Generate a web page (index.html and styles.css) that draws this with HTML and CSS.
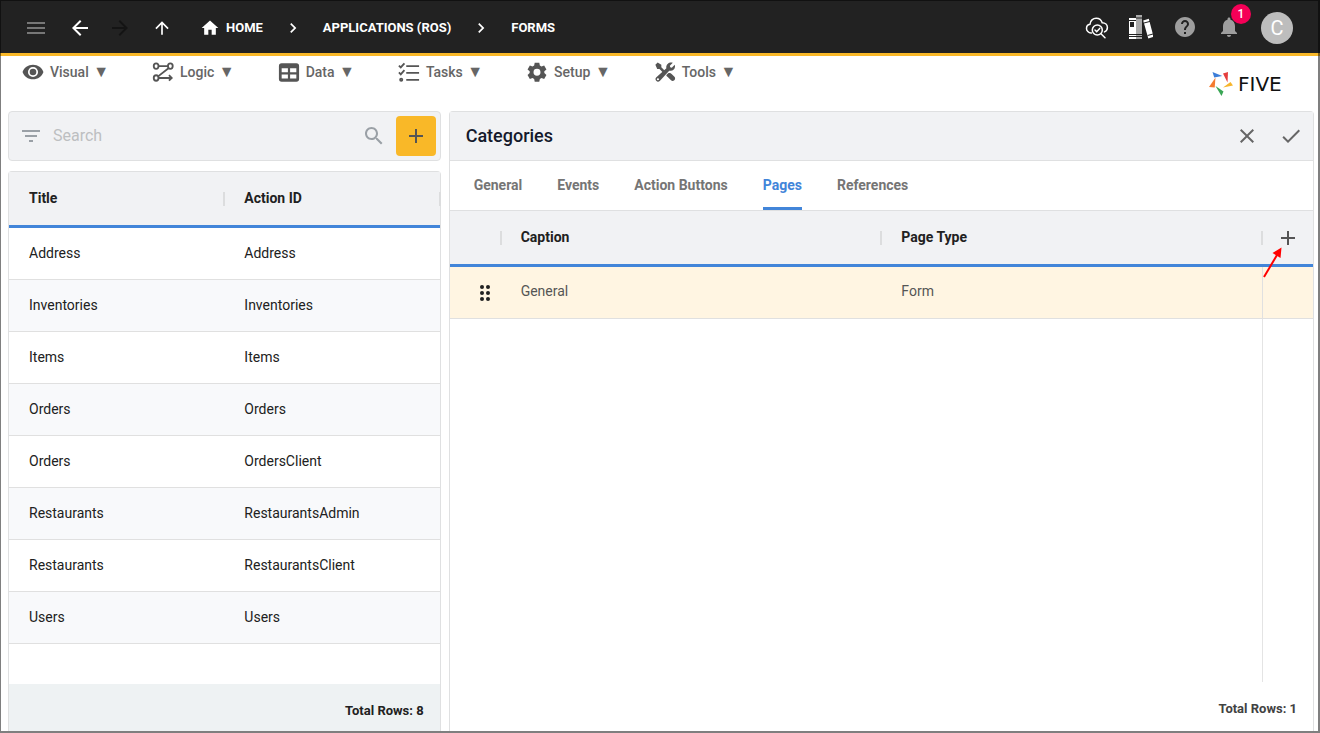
FILE: index.html
```html
<!DOCTYPE html>
<html lang="en">
<head>
<meta charset="utf-8">
<meta name="viewport" content="width=device-width, initial-scale=1">
<title>Five - Forms</title>
<link rel="stylesheet" href="styles.css">
</head>
<body>
<div class="app">
  <header class="topbar">
    <nav class="crumbs" aria-label="Breadcrumb">
      <button class="nav-btn dim" aria-label="Menu"><svg class="i24" viewBox="0 0 24 24"><path d="M3 18h18v-2H3v2zm0-5h18v-2H3v2zm0-7v2h18V6H3z"/></svg></button>
      <button class="nav-btn back" aria-label="Back"><svg class="i24" viewBox="0 0 24 24"><path d="M20 11H7.83l5.59-5.59L12 4l-8 8 8 8 1.41-1.41L7.83 13H20v-2z"/></svg></button>
      <button class="nav-btn forward" aria-label="Forward"><svg class="i24" viewBox="0 0 24 24"><path d="M12 4l-1.41 1.41L16.17 11H4v2h12.17l-5.58 5.59L12 20l8-8z"/></svg></button>
      <button class="nav-btn up" aria-label="Up"><svg class="i20" viewBox="0 0 24 24"><path d="M4 12l1.41 1.41L11 7.83V20h2V7.83l5.58 5.59L20 12l-8-8-8 8z"/></svg></button>
      <a class="crumb home" href="#"><svg class="i20" viewBox="0 0 24 24"><path d="M10 20v-6h4v6h5v-8h3L12 3 2 12h3v8z"/></svg>HOME</a>
      <svg class="i20" viewBox="0 0 24 24"><path d="M10 6L8.59 7.41 13.17 12l-4.58 4.59L10 18l6-6z"/></svg>
      <a class="crumb" href="#">APPLICATIONS (ROS)</a>
      <svg class="i20" viewBox="0 0 24 24"><path d="M10 6L8.59 7.41 13.17 12l-4.58 4.59L10 18l6-6z"/></svg>
      <a class="crumb" href="#">FORMS</a>
    </nav>
    <div class="tools">
      <button class="nav-btn" aria-label="Inspect cloud">
        <svg class="i24 cloud" viewBox="0 0 24 24"><path d="M6.500 18H6C3.500 18 1.500 15.800 1.500 13.400c0-2.300 1.700-3.900 3.500-4.200C5.200 5.700 8 3.200 11.200 3.200c3 0 5.200 1.800 6 4.600 3 0 5.200 2 5.200 4.700 0 2-1.100 3.600-2.900 4.400"/><circle cx="12.300" cy="15" r="5"/><path d="M10 15l1.700 1.700 3-3.300M16 18.700l4 4"/></svg></button>
      <button class="nav-btn" aria-label="Library">
        <svg class="i24 books" viewBox="0 0 24 24"><path d="M0 3h7v21H0zM14.200 5.400l5.600-1.700L24.500 21.800l-5.200 1.700z"/><path class="spine" d="M7 0h6v24H7z"/><path class="rule" d="M0 5.500h7M0 19.500h13M0 21.500h13M7 3h6M15 8l6-1.600M18.600 20.500l5.400-1.500"/><path class="label" d="M1 7h4v5H1z"/></svg></button>
      <button class="nav-btn soft" aria-label="Help"><svg class="i24" viewBox="0 0 24 24"><path d="M12 2C6.480 2 2 6.480 2 12s4.480 10 10 10 10-4.480 10-10S17.520 2 12 2zm1 17h-2v-2h2v2zm2.070-7.750l-.9.920C13.450 12.900 13 13.500 13 15h-2v-.5c0-1.100.45-2.100 1.170-2.830l1.240-1.260c.37-.36.59-.86.590-1.410 0-1.100-.9-2-2-2s-2 .9-2 2H8c0-2.210 1.790-4 4-4s4 1.790 4 4c0 .88-.36 1.680-.93 2.250z"/></svg></button>
      <button class="nav-btn soft bell" aria-label="Notifications"><svg class="i24" viewBox="0 0 24 24"><path d="M12 22c1.100 0 2-.9 2-2h-4c0 1.100.89 2 2 2zm6-6v-5c0-3.070-1.640-5.640-4.500-6.320V4c0-.83-.67-1.500-1.500-1.500s-1.500.67-1.500 1.500v.68C7.630 5.360 6 7.920 6 11v5l-2 2v1h16v-1l-2-2z"/></svg><span class="badge">1</span></button>
      <button class="avatar" aria-label="Account">C</button>
    </div>
  </header>

  <div class="menubar">
    <nav class="menus" aria-label="Main">
      <button class="menu"><svg class="i22" viewBox="0 0 24 24"><path fill-rule="evenodd" d="M12 4C6.500 4 2.200 7.200.6 12 2.200 16.800 6.500 20 12 20s9.800-3.200 11.400-8C21.800 7.200 17.500 4 12 4zm0 13.500a5.500 5.500 0 110-11 5.500 5.500 0 010 11z"/><circle cx="12" cy="12" r="3.600"/></svg><span>Visual <span class="caret">▼</span></span></button>
      <button class="menu"><svg class="i22 line" viewBox="0 0 24 24"><ellipse cx="4.500" cy="5.500" rx="2.600" ry="3"/><ellipse cx="20" cy="5.500" rx="2.600" ry="3"/><ellipse cx="4.500" cy="18.500" rx="2.600" ry="3"/><path d="M7.500 5.500h10M18 8L7 16.500M7.500 18.500h14M18.500 15.500l3 3-3 3"/></svg><span>Logic <span class="caret">▼</span></span></button>
      <button class="menu"><svg class="i22" viewBox="0 0 24 24"><path fill-rule="evenodd" d="M4 2.500h16A3 3 0 0123 5.500v14a3 3 0 01-3 3H4a3 3 0 01-3-3v-14a3 3 0 013-3zM4 8v4.300h6.800V8zm9.200 0v4.300H20V8zM4 14.800v4.400h6.800v-4.400zm9.200 0v4.400H20v-4.400z"/></svg><span>Data <span class="caret">▼</span></span></button>
      <button class="menu"><svg class="i22 line" viewBox="0 0 24 24"><path d="M9 5.500h14M9 13h14M9 20.500h14M1 5l2 2 4-4.500M1 12.500l2 2L7 10"/><circle cx="3.500" cy="20.500" r="1.200"/></svg><span>Tasks <span class="caret">▼</span></span></button>
      <button class="menu"><svg class="i22" viewBox="0 0 24 24"><path fill-rule="evenodd" d="M9.500 2h5l.6 3 1.800 1 2.900-1 2.500 4.300-2.300 2v1.900l2.300 2-2.500 4.300-2.900-1-1.800 1-.6 3h-5l-.6-3-1.800-1-2.900 1-2.500-4.300 2.300-2v-1.900l-2.300-2L4.200 5l2.900 1 1.800-1zM12 8.400a3.800 3.800 0 100 7.600 3.800 3.800 0 000-7.600z"/></svg><span>Setup <span class="caret">▼</span></span></button>
      <button class="menu"><svg class="i22" viewBox="0 0 24 24"><path d="M1.500 4l2.500-2.500L8 4v2.800l4 4-2 2-4-4H3.500z"/><path d="M13.500 15.300l2-2c1.600-.4 3 .2 4 1.200l2.800 2.800c2.300 2.300-1.400 6-3.700 3.700l-2.800-2.800c-1-1-2.600-1.700-2.300-2.900z"/><path fill-rule="evenodd" d="M20.500 2L17.300 5.200l.4 1.700 1.700.4 3.200-3.200c1.400 4.200-2 7.500-6 6.400L6.300 21.800c-2.600 2.400-6.200-1.200-4-3.900L13.500 8C12.600 4 16.500.6 20.500 2zM4.300 18.700a1.200 1.200 0 100 2.400 1.200 1.200 0 000-2.400z"/></svg><span>Tools <span class="caret">▼</span></span></button>
    </nav>
    <a class="logo" href="#" aria-label="Five">
      <svg class="i24" viewBox="0 0 24 24"><path fill="#3b7dd8" d="M3.500 0l9.800 4-8.100 1.500z"/><path fill="#e53e3e" d="M14 1.500L19 0l-.5 10.500z"/><path fill="#f7b52c" d="M14 15.500l7.500-5.500 2.500 3.500z"/><path fill="#3aa655" d="M6.500 14l8 5.500-2 4.500z"/><path fill="#f47b30" d="M6.500 5.500L5.700 15.500 0 15z"/></svg>
      <span class="wordmark">FIVE</span>
    </a>
  </div>

  <main class="content">
    <section class="side">
      <form class="search">
        <svg class="i24" viewBox="0 0 24 24"><path d="M10 18h4v-2h-4v2zM3 6v2h18V6H3zm3 7h12v-2H6v2z"/></svg>
        <input class="search-input" type="search" placeholder="Search" aria-label="Search">
        <svg class="i24" viewBox="0 0 24 24"><path d="M15.500 14h-.79l-.28-.27C15.410 12.590 16 11.110 16 9.500 16 5.910 13.090 3 9.500 3S3 5.910 3 9.500 5.910 16 9.500 16c1.610 0 3.090-.59 4.230-1.570l.27.28v.79l5 4.990L20.490 19l-4.990-5zm-6 0C7.010 14 5 11.990 5 9.500S7.010 5 9.500 5 14 7.010 14 9.500 11.990 14 9.500 14z"/></svg>
        <button class="add" type="button" aria-label="Add form"><svg class="i24" viewBox="0 0 24 24"><path d="M19 13h-6v6h-2v-6H5v-2h6V5h2v6h6v2z"/></svg></button>
      </form>
      <div class="panel list">
        <table class="grid striped">
          <thead><tr><th>Title</th><th>Action ID</th></tr></thead>
          <tbody>
            <tr><td>Address</td><td>Address</td></tr>
            <tr><td>Inventories</td><td>Inventories</td></tr>
            <tr><td>Items</td><td>Items</td></tr>
            <tr><td>Orders</td><td>Orders</td></tr>
            <tr><td>Orders</td><td>OrdersClient</td></tr>
            <tr><td>Restaurants</td><td>RestaurantsAdmin</td></tr>
            <tr><td>Restaurants</td><td>RestaurantsClient</td></tr>
            <tr><td>Users</td><td>Users</td></tr>
          </tbody>
        </table>
        <footer class="total tinted">Total Rows: 8</footer>
      </div>
    </section>

    <section class="panel detail">
      <header class="detail-head">
        <h1 class="detail-title">Categories</h1>
        <button class="icon-btn" aria-label="Close"><svg class="i24" viewBox="0 0 24 24"><path d="M19 6.410L17.590 5 12 10.590 6.410 5 5 6.410 10.590 12 5 17.590 6.410 19 12 13.410 17.590 19 19 17.590 13.410 12z"/></svg></button>
        <button class="icon-btn" aria-label="Save"><svg class="i24" viewBox="0 0 24 24"><path d="M9 16.170L4.830 12l-1.420 1.410L9 19 21 7l-1.410-1.410z"/></svg></button>
      </header>
      <nav class="tabs" role="tablist">
        <button class="tab" role="tab">General</button>
        <button class="tab" role="tab">Events</button>
        <button class="tab" role="tab">Action Buttons</button>
        <button class="tab active" role="tab" aria-selected="true">Pages</button>
        <button class="tab" role="tab">References</button>
      </nav>
      <table class="grid pages">
        <colgroup><col class="narrow"><col><col><col class="narrow"></colgroup>
        <thead><tr><th></th><th>Caption</th><th>Page Type</th><th class="action">
          <button class="add-page" aria-label="Add page"><svg class="i24" viewBox="0 0 24 24"><path d="M19 13h-6v6h-2v-6H5v-2h6V5h2v6h6v2z"/></svg></button>
          <svg class="pointer" viewBox="0 0 20 32"><path d="M1 31L14 9" stroke="#f00" stroke-width="2"/><path fill="#f00" d="M18.500 1.500L17.500 12 9.500 7z"/></svg>
        </th></tr></thead>
        <tbody><tr><td class="action"><svg class="handle" viewBox="0 0 12 18"><circle cx="3" cy="3" r="2"/><circle cx="9" cy="3" r="2"/><circle cx="3" cy="9" r="2"/><circle cx="9" cy="9" r="2"/><circle cx="3" cy="15" r="2"/><circle cx="9" cy="15" r="2"/></svg></td><td>General</td><td>Form</td><td></td></tr></tbody>
      </table>
      <div class="filler"></div>
      <footer class="total">Total Rows: 1</footer>
    </section>
  </main>
</div>
</body>
</html>
```

FILE: styles.css
```css
* { box-sizing: border-box; }

body {
  margin: 0;
  font: 14px/20px Roboto, "Liberation Sans", sans-serif;
  color: #212121;
  background: #fff;
}

button {
  border: 0;
  padding: 0;
  background: none;
  font: inherit;
  color: inherit;
}

a { color: inherit; text-decoration: none; }

svg { display: block; flex: none; fill: currentColor; }
.i20 { width: 20px; height: 20px; }
.i22 { width: 22px; height: 22px; }
.i24 { width: 24px; height: 24px; }
.line { fill: none; stroke: currentColor; stroke-width: 2; }
.cloud { fill: none; stroke: #fff; stroke-width: 1.5; stroke-linecap: round; }
.books .spine { fill: #aaa; }
.books .rule { fill: none; stroke: #222; stroke-width: 1; }
.books .label { fill: #222; }

.app {
  min-height: 100vh;
  display: flex;
  flex-direction: column;
}

.app::after {
  content: "";
  position: fixed;
  inset: 0;
  border: solid rgba(0, 0, 0, .5);
  border-width: 1px 2px 2px 1px;
  pointer-events: none;
}

.topbar {
  display: flex;
  align-items: center;
  justify-content: space-between;
  height: 56px;
  padding: 3px 27px 0 24px;
  border-bottom: 3px solid #f9b828;
  background: #222;
  color: #fff;
}

.crumbs { display: flex; align-items: center; gap: 20px; }
.crumb { display: flex; align-items: center; gap: 6px; font-size: 13px; font-weight: 700; }
.home { margin-left: 8px; }
.dim { color: #777; }
.forward { margin-left: -4px; color: #141414; }

.tools { display: flex; align-items: center; gap: 20px; }
.tools .nav-btn { padding-bottom: 3px; }
.soft { color: #9e9e9e; }
.bell { position: relative; }

.badge {
  position: absolute;
  top: -11px;
  left: 14px;
  width: 20px;
  height: 20px;
  border-radius: 10px;
  background: #f50057;
  color: #fff;
  font-size: 12px;
  font-weight: 500;
}

.avatar {
  width: 32px;
  height: 32px;
  border-radius: 50%;
  background: #bdbdbd;
  color: #fff;
  font-size: 20px;
}

.menubar {
  display: flex;
  justify-content: space-between;
  height: 55px;
  padding: 5px 22px 0 22px;
  color: #555;
}

.menus { display: flex; align-items: flex-start; gap: 43px; }
.menu { display: flex; align-items: center; gap: 6px; font-weight: 500; color: #666; }
.menu svg { color: #555; }
.caret { margin-left: 1px; font-size: 16px; line-height: 20px; }

.logo { display: flex; align-items: center; gap: 5px; height: 46px; color: #111; }
.wordmark { width: 60px; font: 20px/24px "DejaVu Sans", sans-serif; }

.content {
  flex: 1;
  display: grid;
  grid-template-columns: minmax(0, 1fr) minmax(0, 2fr);
  gap: 8px;
  padding: 0 6px 2px 8px;
}

.side { display: flex; flex-direction: column; gap: 10px; }

.search {
  display: flex;
  align-items: center;
  height: 50px;
  padding: 0 4px 0 10px;
  border: 1px solid #dfe0e1;
  border-radius: 4px;
  background: #f1f2f4;
  color: #9aa0a6;
}

.search-input {
  flex: 1;
  min-width: 0;
  padding: 0 10px;
  border: 0;
  outline: 0;
  background: none;
  font: 16px/24px Roboto, sans-serif;
  color: #212121;
}

.search-input::placeholder { color: #bdbfc1; }

.add {
  display: grid;
  place-items: center;
  width: 40px;
  height: 40px;
  margin-left: 10px;
  border-radius: 4px;
  background: #f9b828;
  color: #555;
}

.panel {
  display: flex;
  flex-direction: column;
  border: 1px solid #dfe0e1;
  border-bottom: 0;
  border-radius: 4px 4px 0 0;
}

.list { flex: 1; }

.grid {
  width: 100%;
  table-layout: fixed;
  border-collapse: separate;
  border-spacing: 0;
}

.grid th {
  position: relative;
  height: 56px;
  padding: 0 20px 2px;
  border-bottom: 3px solid #4285d9;
  background: #f1f2f4;
  text-align: left;
  font-weight: 700;
}

.grid th:not(.action)::after {
  content: "";
  position: absolute;
  top: 20px;
  right: -1px;
  width: 2px;
  height: 14px;
  background: #dcddde;
  z-index: 1;
}

.grid td { height: 52px; padding: 0 20px 2px; border-bottom: 1px solid #e0e0e0; }
.striped tr:nth-child(even) td { background: #f8f9fb; }

.total {
  margin-top: auto;
  padding: 17px 16px 10px;
  text-align: right;
  font-size: 13px;
  font-weight: 700;
}

.tinted { background: #eef2f3; }

.detail-head {
  display: flex;
  align-items: center;
  gap: 20px;
  height: 49px;
  padding: 0 10px 0 16px;
  border-bottom: 1px solid #dfe0e1;
  background: #f1f2f4;
}

.detail-title {
  flex: 1;
  margin: 0;
  font-size: 18px;
  font-weight: 500;
  line-height: 24px;
  color: #14192b;
}

.icon-btn { color: #666; }

.tabs {
  display: flex;
  gap: 35px;
  height: 50px;
  padding: 0 24px;
  border-bottom: 1px solid #dfe0e1;
}

.tab {
  padding-bottom: 2px;
  border: solid transparent;
  border-width: 3px 0;
  font-weight: 700;
  color: #757575;
}

.tab.active { border-bottom-color: #4285d9; color: #4285d9; }

.narrow { width: 51px; }
.pages td { padding-bottom: 4px; background: #fff5e2; color: #555; }
.pages td:last-child { border-left: 1px solid #e0e0e0; }
.grid .action { padding: 0; }
.add-page { display: block; margin-left: 14px; color: #555; }
.handle { width: 12px; height: 18px; margin-left: 29px; color: #212121; }

.pointer {
  position: absolute;
  top: 35px;
  left: 1px;
  width: 20px;
  height: 32px;
  z-index: 1;
}

.filler {
  flex: 1;
  align-self: flex-end;
  width: 51px;
  border-left: 1px solid #e4e4e4;
}

.detail .total { margin-top: 0; padding-bottom: 12px; color: #424242; }
```
